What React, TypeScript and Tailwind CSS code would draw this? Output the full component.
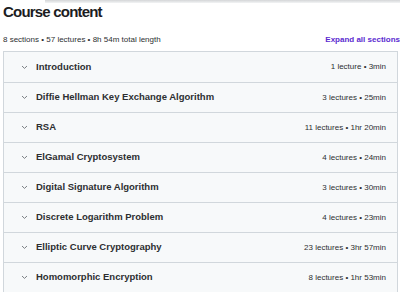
import React from "react";

const sections = [
  { title: "Introduction", meta: "1 lecture • 3min" },
  { title: "Diffie Hellman Key Exchange Algorithm", meta: "3 lectures • 25min" },
  { title: "RSA", meta: "11 lectures • 1hr 20min" },
  { title: "ElGamal Cryptosystem", meta: "4 lectures • 24min" },
  { title: "Digital Signature Algorithm", meta: "3 lectures • 30min" },
  { title: "Discrete Logarithm Problem", meta: "4 lectures • 23min" },
  { title: "Elliptic Curve Cryptography", meta: "23 lectures • 3hr 57min" },
  { title: "Homomorphic Encryption", meta: "8 lectures • 1hr 53min" },
];

function Chevron() {
  return (
    <svg width="7" height="5" viewBox="0 0 7 5" className="shrink-0">
      <path d="M1.3 1.3 L3.5 3.4 L5.7 1.3" fill="none" stroke="#7a7f83" strokeWidth="1" strokeLinecap="round" strokeLinejoin="round" />
    </svg>
  );
}

export default function App() {
  return (
    <div
      className="relative w-[400px] h-[292px] overflow-hidden bg-white text-[#2d2f31]"
      style={{ fontFamily: '"Liberation Sans", Arial, sans-serif' }}
    >
      <div className="absolute top-0 left-[45px] right-0 h-[3px] bg-gradient-to-b from-[#d4d6d8] to-[#f3f4f5]" />
      <div className="pl-[3px] pr-[3px]">
        <h2 className="pt-[3px] text-[15px] leading-[18px] font-bold tracking-[-0.8px] text-[#1c1d1f]">Course content</h2>
        <div className="mt-[13px] mr-[-3px] flex items-center justify-between h-[11px]">
          <span className="text-[8px] leading-[10px] text-[#2d2f31]">8 sections • 57 lectures • 8h 54m total length</span>
          <span className="text-[8px] leading-[10px] font-bold text-[#5b2bd0] whitespace-nowrap">Expand all sections</span>
        </div>
        <div className="mt-[6px] border border-[#d1d7dc] w-[395px]">
          {sections.map((s, i) => (
            <div
              key={s.title}
              className={`flex items-center h-[30px] bg-[#f7f9fa] pl-[17px] pr-[11px] ${i > 0 ? "border-t border-[#d1d7dc]" : ""}`}
            >
              <Chevron />
              <span className="ml-[8px] text-[9.5px] font-bold text-[#2d2f31] flex-1 truncate">{s.title}</span>
              <span className="text-[8px] text-[#2d2f31]">{s.meta}</span>
            </div>
          ))}
        </div>
      </div>
    </div>
  );
}
